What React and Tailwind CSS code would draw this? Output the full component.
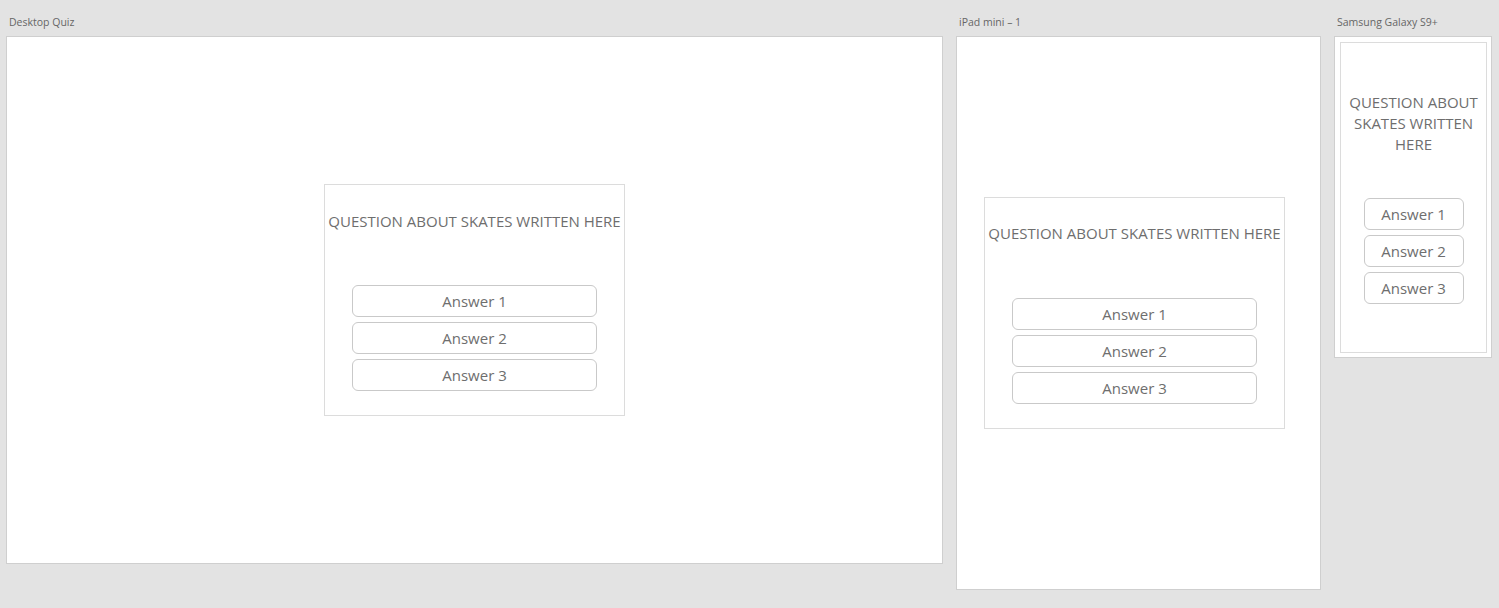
const font = { fontFamily: '"Open Sans", "Noto Sans", sans-serif' };

function Answers({ width }) {
  return (
    <div className={`flex flex-col gap-[5px] ${width}`}>
      {["Answer 1", "Answer 2", "Answer 3"].map((a) => (
        <button
          key={a}
          className="h-[32px] rounded-[6px] border border-[#c9c9c9] bg-white text-[15px] text-[#6e6e6e]"
        >
          {a}
        </button>
      ))}
    </div>
  );
}

function QuizCard({ top = "mt-[25px]", gap = "mt-[53px]" }) {
  return (
    <div className="w-[301px] h-[232px] border border-[#dcdcdc] bg-white flex flex-col items-center">
      <p className={`${top} h-[22px] leading-[22px] text-[15px] text-[#6e6e6e] whitespace-nowrap`}>
        QUESTION ABOUT SKATES WRITTEN HERE
      </p>
      <div className={gap}>
        <Answers width="w-[245px]" />
      </div>
    </div>
  );
}

function Board({ label, className, children }) {
  return (
    <div className="flex flex-col">
      <div className="h-[36px] pl-[3px] pt-[15px] text-[10.5px] leading-[14px] text-[#666]">
        {label}
      </div>
      <div className={`border border-[#cfcfcf] bg-white ${className}`}>{children}</div>
    </div>
  );
}

export default function App() {
  return (
    <main style={font} className="w-[1499px] h-[608px] bg-[#e3e3e3] overflow-hidden flex gap-[13px] pl-[6px]">
      <Board label="Desktop Quiz" className="w-[937px] h-[528px] flex items-center justify-center">
        <QuizCard />
      </Board>

      <Board label="iPad mini – 1" className="w-[365px] h-[554px] flex items-center pl-[27px]">
        <QuizCard top="mt-[24px]" gap="mt-[54px]" />
      </Board>

      <Board label="Samsung Galaxy S9+" className="w-[158px] h-[322px] pt-[5px] pl-[5px]">
        <div className="w-[147px] h-[311px] border border-[#dcdcdc] flex flex-col items-center">
          <p className="mt-[49px] w-[140px] text-center text-[15px] leading-[21px] text-[#6e6e6e]">
            QUESTION ABOUT SKATES WRITTEN HERE
          </p>
          <div className="mt-[43px]">
            <Answers width="w-[100px]" />
          </div>
        </div>
      </Board>
    </main>
  );
}
